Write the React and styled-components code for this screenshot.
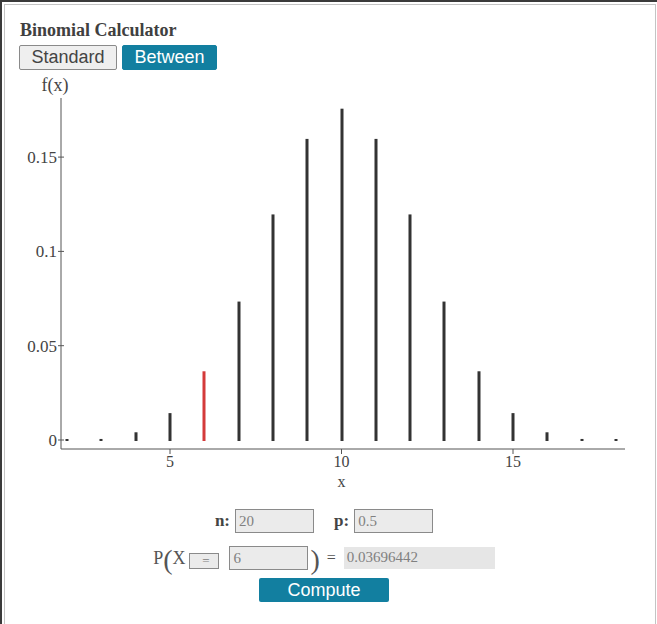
import React from "react";
import styled, { createGlobalStyle } from "styled-components";

const Global = createGlobalStyle`
  html, body { margin: 0; padding: 0; overflow: hidden; background: #fff; }
  body { font-family: "Liberation Serif", "Times New Roman", serif; }
`;

const Outer = styled.div`
  width: 660px;
  height: 640px;
  border: 2px solid #3a3a3a;
  padding: 2px;
  box-sizing: border-box;
`;

const Inner = styled.div`
  border: 1px solid #c4c4c4;
  height: 100%;
  box-sizing: border-box;
  padding: 14px 14px 0 14px;
`;

const Title = styled.h1`
  margin: 0 0 4px 1px;
  font-size: 18px;
  font-weight: bold;
  color: #404040;
  line-height: 22px;
`;

const Tabs = styled.div`
  display: flex;
  gap: 5px;
`;

const Tab = styled.button`
  font-family: "Liberation Sans", Arial, sans-serif;
  font-size: 18px;
  height: 25px;
  line-height: 21px;
  padding: 0 10px;
  margin: 0;
  border-radius: 2px;
  border: 1px solid ${(p) => (p.$active ? "#127fa0" : "#8a8a8a")};
  background: ${(p) => (p.$active ? "#127fa0" : "#efefef")};
  color: ${(p) => (p.$active ? "#fff" : "#444")};
  width: ${(p) => p.$w}px;
`;

const Chart = styled.svg`
  display: block;
  margin-top: 2px;
  overflow: visible;
`;

const Controls = styled.div`
  width: 610px;
  display: flex;
  flex-direction: column;
  align-items: center;
`;

const Row = styled.div`
  display: flex;
  align-items: center;
  height: ${(p) => p.$h}px;
  margin-top: ${(p) => p.$mt}px;
  color: #555;
`;

const Label = styled.span`
  font-weight: bold;
  font-size: 17px;
  color: #444;
  margin-right: 5px;
  margin-left: ${(p) => p.$ml || 0}px;
`;

const Field = styled.div`
  width: ${(p) => p.$w}px;
  height: ${(p) => p.$h}px;
  box-sizing: border-box;
  border: ${(p) => (p.$plain ? "none" : "1px solid #8a8a8a")};
  background: ${(p) => (p.$plain ? "#e6e6e6" : "#ebebeb")};
  color: #808080;
  font-size: ${(p) => p.$fs || 15}px;
  line-height: ${(p) => p.$h - 2}px;
  padding-left: 3px;
  text-align: ${(p) => (p.$center ? "center" : "left")};
  margin: ${(p) => p.$m || "0"};
`;

const Sym = styled.span`
  font-size: ${(p) => p.$s}px;
  color: #555;
  line-height: 1;
  margin: ${(p) => p.$m || "0"};
`;

const ComputeBtn = styled.button`
  margin-top: 8px;
  width: 130px;
  height: 24px;
  border: none;
  border-radius: 2px;
  background: #127fa0;
  color: #fff;
  font-family: "Liberation Sans", Arial, sans-serif;
  font-size: 18px;
  line-height: 24px;
  padding: 0;
`;

function binom(n, k, p) {
  let c = 1;
  for (let i = 0; i < k; i++) c = (c * (n - i)) / (i + 1);
  return c * Math.pow(p, k) * Math.pow(1 - p, n - k);
}

const OX = 19;
const OY = 72;
const sx = (k) => 170 + (k - 5) * 34.3 - OX;
const zeroY = 440 - OY;
const sy = (v) => zeroY - v * 1886;

function BinomChart() {
  const axisX = 61 - OX;
  const axisY = 449 - OY;
  const ks = [];
  for (let k = 2; k <= 18; k++) ks.push(k);
  return (
    <Chart width="630" height="420">
      <text x={55 - OX} y={91 - OY} textAnchor="middle" fontSize="18" fill="#444" fontFamily="Liberation Serif">f(x)</text>
      <line x1={axisX} y1={98 - OY} x2={axisX} y2={axisY} stroke="#555" strokeWidth="1" />
      <line x1={axisX} y1={axisY} x2={625 - OX} y2={axisY} stroke="#555" strokeWidth="1" />
      {[0, 0.05, 0.1, 0.15].map((v) => (
        <g key={v}>
          <line x1={axisX - 3} x2={axisX + 3} y1={sy(v)} y2={sy(v)} stroke="#555" />
          <text x={axisX - 4} y={sy(v) + 6} textAnchor="end" fontSize="17" fill="#444" fontFamily="Liberation Serif">{v}</text>
        </g>
      ))}
      {[5, 10, 15].map((k) => (
        <g key={k}>
          <line x1={sx(k)} x2={sx(k)} y1={axisY} y2={axisY + 5} stroke="#555" />
          <text x={sx(k)} y={axisY + 18} textAnchor="middle" fontSize="16" fill="#444" fontFamily="Liberation Serif">{k}</text>
        </g>
      ))}
      <text x={sx(10)} y={487 - OY} textAnchor="middle" fontSize="16" fill="#444" fontFamily="Liberation Serif">x</text>
      {ks.map((k) => {
        const v = binom(20, k, 0.5);
        const h = Math.max(2, v * 1886);
        return (
          <rect
            key={k}
            x={Math.round(sx(k)) - 1.5}
            y={zeroY - h + 1}
            width="3"
            height={h}
            fill={k === 6 ? "#d43a3a" : "#333"}
          />
        );
      })}
    </Chart>
  );
}

export default function App() {
  return (
    <>
      <Global />
      <Outer>
        <Inner>
          <Title>Binomial Calculator</Title>
          <Tabs>
            <Tab $w={98}>Standard</Tab>
            <Tab $active $w={95}>Between</Tab>
          </Tabs>
          <BinomChart />
          <Controls>
            <Row $h={24} $mt={17}>
              <Label>n:</Label>
              <Field $w={79} $h={24}>20</Field>
              <Label $ml={20}>p:</Label>
              <Field $w={79} $h={24}>0.5</Field>
            </Row>
            <Row $h={24} $mt={13}>
              <Sym $s={18}>P</Sym>
              <Sym $s={28} $m="0 0 -3px 0">(</Sym>
              <Sym $s={18} $m="0 4px 0 0">X</Sym>
              <Field $w={30} $h={16} $fs={13} $center $m="6px 0 0 0">=</Field>
              <Field $w={79} $h={24} $m="0 0 0 10px">6</Field>
              <Sym $s={28} $m="0 7px -3px 2px">)</Sym>
              <Sym $s={16} $m="0 8px 0 0">=</Sym>
              <Field $plain $w={151} $h={22} $m="0 0 1px 0">0.03696442</Field>
            </Row>
            <ComputeBtn>Compute</ComputeBtn>
          </Controls>
        </Inner>
      </Outer>
    </>
  );
}
